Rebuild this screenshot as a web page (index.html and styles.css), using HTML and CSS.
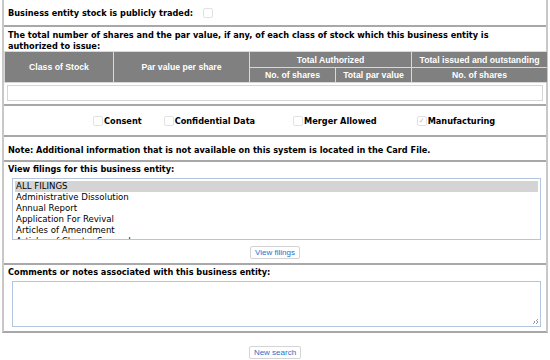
FILE: index.html
```html
<!DOCTYPE html>
<html>
<head>
<meta charset="utf-8">
<link rel="stylesheet" href="styles.css">
</head>
<body>
<div class="panel">
  <div class="row row-traded">
    <span class="label">Business entity stock is publicly traded:</span>
    <span class="cb"></span>
  </div>
  <div class="row row-shares">
    <div class="label">The total number of shares and the par value, if any, of each class of stock which this business entity is authorized to issue:</div>
  </div>
  <div class="stock">
    <div class="hd c1">Class of Stock</div>
    <div class="hd c2">Par value per share</div>
    <div class="hd c3">Total Authorized</div>
    <div class="hd c4">Total issued and outstanding</div>
    <div class="hd c5">No. of shares</div>
    <div class="hd c6">Total par value</div>
    <div class="hd c7">No. of shares</div>
  </div>
  <div class="empty-row"><div class="empty-box"></div></div>
  <div class="row row-flags">
    <span class="flag f1"><span class="cb"></span>Consent</span>
    <span class="flag f2"><span class="cb"></span>Confidential Data</span>
    <span class="flag f3"><span class="cb"></span>Merger Allowed</span>
    <span class="flag f4"><span class="cb checked">&#10003;</span>Manufacturing</span>
  </div>
  <div class="row row-note">
    <span class="label">Note: Additional information that is not available on this system is located in the Card File.</span>
  </div>
  <div class="row row-filings">
    <div class="label">View filings for this business entity:</div>
    <div class="listbox">
      <div class="opt sel">ALL FILINGS</div>
      <div class="opt">Administrative Dissolution</div>
      <div class="opt">Annual Report</div>
      <div class="opt">Application For Revival</div>
      <div class="opt">Articles of Amendment</div>
      <div class="opt">Articles of Charter Surrender</div>
    </div>
    <div class="btn-line"><span class="btn">View filings</span></div>
  </div>
  <div class="row row-comments">
    <div class="label">Comments or notes associated with this business entity:</div>
    <div class="textarea"><span class="grip"></span></div>
  </div>
</div>
<div class="btn-line bottom"><span class="btn">New search</span></div>
</body>
</html>
```
FILE: styles.css
```css
html, body { margin: 0; padding: 0; background: #fff; }
body { font-family: "DejaVu Sans", Verdana, sans-serif; font-size: 8.2px; color: #000; }
.panel {
  margin-left: 2px;
  width: 542px;
  border-left: 2px solid #c8c8c8;
  border-right: 2px solid #c8c8c8;
  border-bottom: 2px solid #a8a8a8;
}
.label { font-weight: bold; }
.row { border-top: 2px solid #a8a8a8; padding: 0 4px; }
.row-traded { border-top: none; height: 25px; display: flex; align-items: center; }
.row-traded .label { padding-top: 1px; }
.row-traded .cb { margin-left: 10px; }
.row-shares { padding-top: 3px; line-height: 11px; height: 21px; }
.row-shares .label { max-width: 505px; }
.cb {
  display: inline-block; width: 8px; height: 8px;
  border: 1px solid #e2e2e2; border-radius: 2px; background: #fff;
  vertical-align: -1px; font-size: 7px; line-height: 8px; text-align: center; color: #bbb;
}
.stock {
  display: grid;
  grid-template-columns: 108px 135px 85px 75px 135px;
  grid-template-rows: 15px 14px;
  gap: 1px;
  background: #d8d8d8;
  padding: 1px 0 1px 1px;
}
.hd {
  background: #808080; color: #fff; font-family: "Liberation Sans", Arial, sans-serif;
  font-weight: bold; font-size: 8.7px; display: flex; align-items: center; justify-content: center;
}
.c1 { grid-column: 1; grid-row: 1 / span 2; }
.c2 { grid-column: 2; grid-row: 1 / span 2; }
.c3 { grid-column: 3 / span 2; grid-row: 1; }
.c4 { grid-column: 5; grid-row: 1; }
.c5 { grid-column: 3; grid-row: 2; }
.c6 { grid-column: 4; grid-row: 2; }
.c7 { grid-column: 5; grid-row: 2; }
.empty-row { padding: 2px 3px 3px 3px; }
.empty-box { height: 14px; border: 1px solid #d6d6d6; }
.row-flags { height: 29px; display: flex; align-items: center; padding-left: 89px; white-space: nowrap; }
.flag { font-weight: bold; display: inline-flex; align-items: center; }
.flag .cb { margin-right: 1px; }
.f2 { margin-left: 22px; }
.f3 { margin-left: 38px; }
.f4 { margin-left: 40px; }
.row-note { height: 25px; display: flex; align-items: center; padding-top: 2px; box-sizing: border-box; }
.row-filings { padding-top: 2px; padding-bottom: 4px; }
.listbox {
  margin: 4px 1px 0 4px; height: 56px; border: 1px solid #b3c6dd; overflow: hidden; padding: 2px 2px;
}
.opt { height: 11px; line-height: 11px; padding-left: 1px; font-size: 8.6px; white-space: nowrap; }
.opt.sel { background: #d4d4d4; }
.btn-line { display: flex; justify-content: center; margin-top: 6px; }
.btn {
  font-family: "Liberation Sans", Arial, sans-serif; font-size: 8px; color: #2a6fcc;
  border: 1px solid #d4d4d4; border-radius: 2px; padding: 1px 4px; background: #fff; line-height: 9px;
}
.row-comments { padding-top: 2px; padding-bottom: 4px; }
.textarea {
  margin: 4px 1px 0 4px; height: 44px; border: 1px solid #b3c6dd; position: relative;
}
.grip { position: absolute; right: 2px; bottom: 2px; width: 5px; height: 5px;
  background: linear-gradient(135deg, transparent 40%, #999 40%, #999 50%, transparent 50%, transparent 70%, #999 70%, #999 80%, transparent 80%); }
.bottom { margin-top: 13px; }
```
